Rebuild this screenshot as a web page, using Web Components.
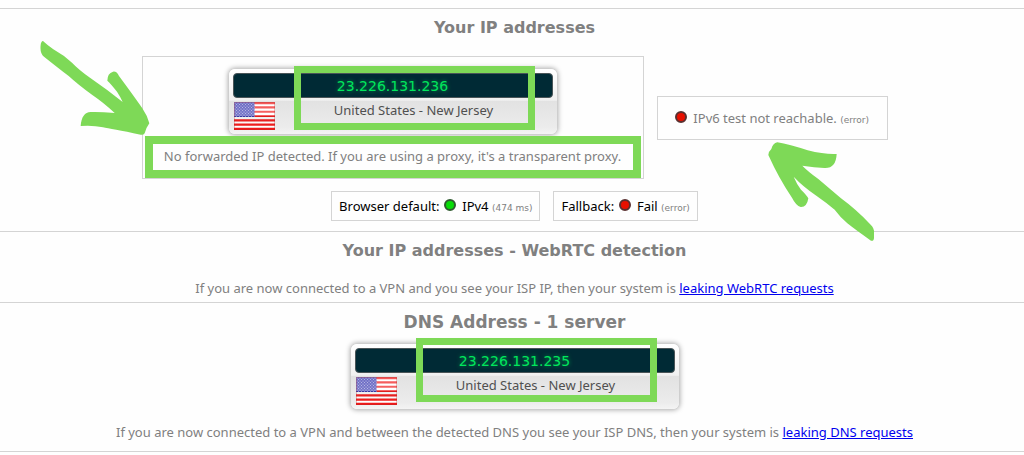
<!DOCTYPE html>
<html lang="en">
<head>
<meta charset="utf-8">
<title>IP leak test</title>
<style>
  body { margin: 0; background: #fefefe; color: #808080; font: 13px/16px "Noto Sans", "DejaVu Sans", sans-serif; }
</style>
</head>
<body>
<leak-page></leak-page>

<script>
const define = (name, html) => {
  const template = document.createElement('template');
  template.innerHTML = html;
  customElements.define(name, class extends HTMLElement {
    constructor() {
      super();
      this.attachShadow({ mode: 'open' }).append(template.content.cloneNode(true));
    }
  });
};

define('status-dot', `
  <style>
    :host { display: inline-block; box-sizing: border-box; width: 12px; height: 12px; margin-right: 3px; border: 2px solid #5a3030; border-radius: 50%; background: #e81000; }
    :host([state="ok"]) { border-color: #2f5b2f; background: #08dc08; }
  </style>`);

define('us-flag', `
  <style>
    :host { display: block; width: 41px; height: 28px; }
    svg { display: block; width: 100%; height: 100%; }
  </style>
  <svg viewBox="0 0 41 28" role="img" aria-label="Flag of the United States">
    <defs>
      <linearGradient id="shine" x1="0" y1="0" x2="0" y2="1">
        <stop offset="0" stop-color="#fff" stop-opacity=".28"/>
        <stop offset=".5" stop-color="#fff" stop-opacity=".34"/>
        <stop offset=".51" stop-color="#555" stop-opacity=".12"/>
        <stop offset="1" stop-color="#fff" stop-opacity="0"/>
      </linearGradient>
      <pattern id="stars" width="3" height="3" patternUnits="userSpaceOnUse">
        <circle cx="1" cy="1" r=".6" fill="#b4b4e4"/><circle cx="2.5" cy="2.5" r=".5" fill="#b4b4e4"/>
      </pattern>
    </defs>
    <rect width="41" height="28" fill="#fff"/>
    <path d="M0 1.08H41M0 5.38H41M0 9.7H41M0 14H41M0 18.3H41M0 22.6H41M0 26.9H41" stroke="#f01616" stroke-width="2.15"/>
    <rect width="20.5" height="15" fill="#3434ae"/>
    <rect width="20.5" height="15" fill="url(#stars)"/>
    <rect width="41" height="28" fill="url(#shine)"/>
    <rect x=".5" y=".5" width="40" height="27" fill="none" stroke="#a33" stroke-opacity=".3"/>
  </svg>`);

define('mark-frame', `
  <style>
    :host { position: absolute; box-sizing: border-box; border: 7px solid #7ed957; pointer-events: none; }
  </style>`);

define('ip-card', `
  <style>
    :host { display: block; position: relative; box-sizing: border-box; width: 328px; padding: 4px; border-radius: 6px;
      background: linear-gradient(#fff, #f0f0f0 48%, #e2e2e2 50%, #ececec 90%, #f4f4f4); box-shadow: 0 0 5px 1px #aaa; }
    .ip { box-sizing: border-box; height: 25px; border: 1px solid #4a5558; border-radius: 4px; background: #002a35; color: #00e65c;
      font: 14px/24px "DejaVu Sans", sans-serif; text-align: center; text-shadow: 0 0 4px #009848; }
    .place { display: flex; align-items: flex-start; padding: 4px 0 0 1px; color: #505050; }
    .place span { flex: 1; text-align: center; }
    mark-frame { left: 65px; top: var(--mark-top, -3px); width: 241px; height: 64px; }
  </style>
  <div class="ip"><slot name="ip"></slot></div>
  <div class="place"><us-flag></us-flag><span><slot></slot></span></div>
  <mark-frame></mark-frame>`);

define('info-box', `
  <style>
    :host { display: block; position: relative; box-sizing: border-box; border: 1px solid #d4d4d4; white-space: nowrap; }
  </style>
  <slot></slot>`);

define('mark-arrow', `
  <style>
    :host { display: block; position: absolute; width: 110px; height: 96px; pointer-events: none; }
    svg { display: block; width: 100%; height: 100%; }
    .up { display: none; }
    :host([up]) { width: 107px; height: 100px; }
    :host([up]) .up { display: block; }
    :host([up]) .down { display: none; }
  </style>
  <svg class="down" viewBox="118 120 330 288" fill="#7ed957" aria-hidden="true">
    <path d="M120 135Q121 124 127 123Q142 137 158 148Q190 166 214 188Q235 210 268 233Q322 270 366 306Q359 290 349 275Q330 251 320 242Q320 220 337 215Q348 213 355 228Q398 286 425 325Q440 347 446 370Q437 382 432 400Q428 406 420 404Q330 386 307 382Q276 375 240 378Q243 337 270 336Q299 335 342 339Q307 307 276 286Q230 252 204 228Q174 205 130 170Q117 160 120 135Z"/>
  </svg>
  <svg class="up" viewBox="381 183 321 300" fill="#7ed957" aria-hidden="true">
    <path d="M382 222Q382 212 391 204Q395 187 409 184Q445 190 500 208Q552 221 587 219Q585 263 550 261Q521 259 484 254Q498 269 532 294L600 352Q644 384 689 431Q700 441 699 455V470Q699 481 690 479Q648 450 619 427Q598 409 581 386Q555 364 526 344Q485 316 458 287Q467 309 480 326Q496 341 502 352Q498 379 479 378Q465 374 453 350Q414 293 382 222Z"/>
  </svg>`);

define('leak-section', `
  <style>
    :host { display: block; box-sizing: border-box; padding: 8px 0 0 5px; border-top: 1px solid #d4d4d4; text-align: center; }
    h2 { margin: 0; font: bold 16px/22px "DejaVu Sans", sans-serif; }
    :host([large]) h2 { font-size: 17px; }
  </style>
  <h2><slot name="title"></slot></h2>
  <slot></slot>`);

define('leak-page', `
  <style>
    :host { display: block; padding-top: 8px; }
    .addresses { min-height: 223px; }
    .webrtc { min-height: 71px; }
    .dns { min-height: 150px; border-bottom: 1px solid #d4d4d4; }
    .row { display: flex; justify-content: center; align-items: center; gap: 13px; }
    .main { margin-top: 17px; }
    .v4 { width: 502px; height: 123px; padding-top: 12px; }
    .v4 ip-card { margin: 0 auto; }
    .v4 p { margin: 14px 0 0; }
    .forwarded { left: 2px; right: 2px; top: 79px; height: 42px; border-width: 8px; }
    .down { left: -103px; top: -17px; }
    .v6 { min-width: 231px; padding: 13px; }
    .up { left: 110px; top: 45px; }
    .results { margin-top: 12px; }
    .result { padding: 6px 7px; color: #000; }
    .result status-dot { margin-left: 1px; }
    small { color: #808080; font: 9px "DejaVu Sans", sans-serif; }
    p { margin: 0; }
    .webrtc p { margin-top: 18px; }
    .dns ip-card { --mark-top: -6px; margin: 11px auto 15px; }
    a { color: #0000ee; }
  </style>
  <main>
    <leak-section class="addresses">
      <span slot="title">Your IP addresses</span>
      <div class="row main">
        <info-box class="v4">
          <ip-card><span slot="ip">23.226.131.236</span>United States - New Jersey</ip-card>
          <p>No forwarded IP detected. If you are using a proxy, it's a transparent proxy.</p>
          <mark-frame class="forwarded"></mark-frame>
          <mark-arrow class="down"></mark-arrow>
        </info-box>
        <info-box class="v6"><status-dot></status-dot> IPv6 test not reachable. <small>(error)</small><mark-arrow class="up" up></mark-arrow></info-box>
      </div>
      <div class="row results">
        <info-box class="result">Browser default: <status-dot state="ok"></status-dot> IPv4 <small>(474 ms)</small></info-box>
        <info-box class="result">Fallback: <status-dot></status-dot> Fail <small>(error)</small></info-box>
      </div>
    </leak-section>
    <leak-section class="webrtc">
      <span slot="title">Your IP addresses - WebRTC detection</span>
      <p>If you are now connected to a VPN and you see your ISP IP, then your system is <a href="#webrtc">leaking WebRTC requests</a></p>
    </leak-section>
    <leak-section class="dns" large>
      <span slot="title">DNS Address - 1 server</span>
      <ip-card><span slot="ip">23.226.131.235</span>United States - New Jersey</ip-card>
      <p>If you are now connected to a VPN and between the detected DNS you see your ISP DNS, then your system is <a href="#dns">leaking DNS requests</a></p>
    </leak-section>
  </main>`);
</script>
</body>
</html>
